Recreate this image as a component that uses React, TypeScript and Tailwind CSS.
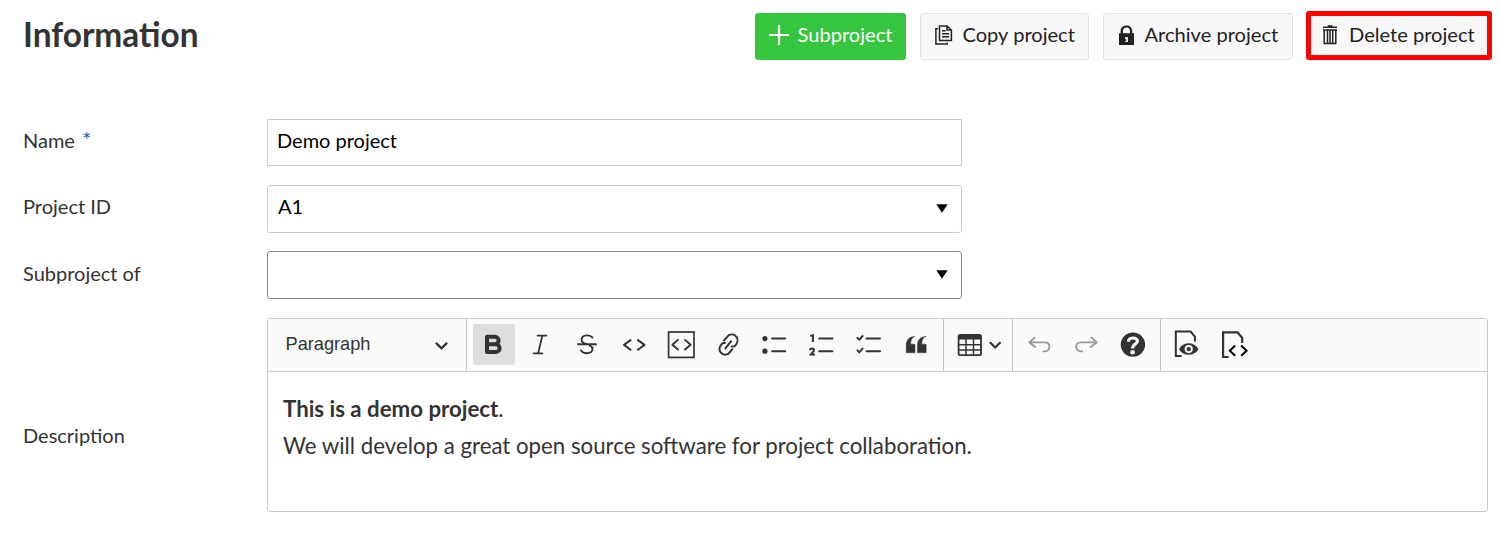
import type { ReactNode } from "react";

const lato = "font-['Lato','Liberation_Sans',sans-serif]";

function Tool({ children, active, muted, w }: { children: ReactNode; active?: boolean; muted?: boolean; w?: string }) {
  return (
    <button
      className={`flex h-[41px] shrink-0 items-center justify-center rounded-[3px] ${w ?? "w-[42px]"} ${
        active ? "bg-[#dedede]" : ""
      } ${muted ? "text-[#999999]" : "text-[#333333]"}`}
    >
      {children}
    </button>
  );
}

/* 42 x 41 drawing area, one unit per pixel */
function Glyph({ children, sw = 2, wide }: { children: ReactNode; sw?: number; wide?: boolean }) {
  return (
    <svg
      width={wide ? 60 : 42}
      height="41"
      viewBox={wide ? "0 0 60 41" : "0 0 42 41"}
      fill="none"
      stroke="currentColor"
      strokeWidth={sw}
      strokeLinecap="round"
      strokeLinejoin="round"
      className="shrink-0"
    >
      {children}
    </svg>
  );
}

function Separator() {
  return <div className="-mb-px w-px shrink-0 self-stretch bg-[#c4c4c4]" />;
}

function Toolbar() {
  return (
    <div className="flex h-[53px] items-center border-b border-[#cfcfcf] bg-[#fafafa] pb-px">
      <button className="flex h-full w-[198px] shrink-0 items-center justify-between pr-[18px] pl-[17.5px] font-['Liberation_Sans',sans-serif] text-[18.2px] text-[#333]">
        <span className="pt-[1px]">Paragraph</span>
        <svg width="13" height="8" viewBox="0 0 13 8" fill="none" stroke="currentColor" strokeWidth="2.2" strokeLinecap="round" strokeLinejoin="round" className="mt-[2px]">
          <path d="M1.5 1.4 6.5 6.4 11.5 1.4" />
        </svg>
      </button>
      <Separator />
      <div className="flex w-[476px] shrink-0 gap-[5px] pl-[6px]">
        <Tool active>
          <Glyph sw={4}>
            <path strokeLinejoin="round" d="M14 12.8H21.8a3.8 3.7 0 0 1 0 7.4H14H22.6a4 3.95 0 0 1 0 7.9H14Z" />
          </Glyph>
        </Tool>
        <Tool>
          <Glyph sw={1.8}>
            <path d="M17.5 11.6H26.5M13.7 29.3H22.3M22.4 11.6 18.1 29.3" />
          </Glyph>
        </Tool>
        <Tool>
          <Glyph sw={1.9}>
            <path d="M25.5 13.6C24.2 11.7 22.3 11.3 20 11.4C16.8 11.5 14.6 13.3 14.6 15.7C14.6 18 16.3 19.3 19.2 20M22.6 21.4C24.6 22.3 25.6 23.5 25.5 25.3C25.3 27.9 23 29.2 19.8 29.2C17 29.2 15.1 28.2 13.9 26.2" />
            <path strokeLinecap="butt" d="M10.2 20.3H29.8" />
          </Glyph>
        </Tool>
        <Tool>
          <Glyph>
            <path strokeLinecap="butt" d="M17.2 15.6 10 20.9 17.2 26.2M23.3 15.6 30.5 20.9 23.3 26.2" />
          </Glyph>
        </Tool>
        <Tool>
          <Glyph sw={1.7}>
            <rect x="7.6" y="8" width="25.4" height="25.4" strokeLinejoin="miter" />
            <path strokeWidth="1.9" strokeLinecap="butt" d="M17.6 15.4 11.4 20.7 17.6 26M23.4 15.4 29.6 20.7 23.4 26" />
          </Glyph>
        </Tool>
        <Tool>
          <Glyph sw={2}>
            <path d="M17.4 24.4 23.2 17.2M15.9 16.6 19.2 12.8C21.3 10.2 24.7 9.8 27.3 11.8S30.3 17.3 28.3 20.1L26.6 22.3L23.8 22.6M24.3 25.2 21.9 28.2C19.7 31 16.4 31.4 13.7 29.4S10.8 23.9 12.9 21.1L14.4 19.3L17 19" />
          </Glyph>
        </Tool>
        <Tool>
          <Glyph>
            <path d="M17.2 14.6H30.2M17.2 27.2H30.2" />
            <circle cx="9.9" cy="14.6" r="2.6" fill="currentColor" stroke="none" />
            <circle cx="9.9" cy="27.2" r="2.6" fill="currentColor" stroke="none" />
          </Glyph>
        </Tool>
        <Tool>
          <Glyph>
            <path d="M17.2 14.6H30.4M17.2 27.2H30.4" />
            <path strokeLinecap="butt" strokeLinejoin="miter" d="M8.4 12 10.9 11.2V17.9M7.9 26.2C8.1 24 12 23.8 12 26.1C12 27.6 9.9 29 8.9 30.4H12.9" />
          </Glyph>
        </Tool>
        <Tool>
          <Glyph>
            <path d="M17.5 14.6H31M17.5 27.2H31M8.4 13.8 10.2 15.8 13.6 12M8.4 26.4 10.2 28.4 13.6 24.6" />
          </Glyph>
        </Tool>
        <Tool>
          <Glyph sw={0.4}>
            <path
              fill="currentColor"
              d="M18.8 12.4C15.8 13.4 14.7 16 14.7 20.2H19V28.8H10.2V21.3C10.2 16.2 12.8 12.6 18.8 12.4ZM30 12.4C27 13.4 25.8 16 25.8 20.2H30.2V28.8H21.4V21.3C21.4 16.2 24 12.6 30 12.4Z"
            />
          </Glyph>
        </Tool>
      </div>
      <Separator />
      <div className="flex w-[68px] shrink-0 pl-[5px]">
        <Tool w="w-[60px]">
          <Glyph wide>
            <rect x="9.6" y="11" width="22.4" height="20.2" rx="1.8" strokeWidth="1.8" />
            <path fill="currentColor" stroke="none" d="M9 11H32.5V15.6H9Z" />
            <path strokeWidth="1.5" d="M9.6 20.8H32M9.6 26H32M17 15V31M24.5 15V31" />
            <path strokeWidth="2.2" d="M41.4 18.8 46.2 23.5 51 18.8" />
          </Glyph>
        </Tool>
      </div>
      <Separator />
      <div className="flex w-[147px] shrink-0 gap-[5px] pl-[6px]">
        <Tool muted>
          <Glyph sw={1.9}>
            <path d="M15.5 13.6 10.4 18.4 16.2 23M10.8 18.4H26C29 18.4 30.4 20.6 30.4 22.8S29 27.4 26 27.4H24.5" />
          </Glyph>
        </Tool>
        <Tool muted>
          <Glyph sw={1.9}>
            <path d="M25.5 13.6 30.6 18.4 24.8 23M30.2 18.4H15C12 18.4 10.1 20.6 10.1 22.8S12 27.4 15 27.4H16.2" />
          </Glyph>
        </Tool>
        <Tool>
          <Glyph>
            <circle cx="19.9" cy="20.6" r="12.2" fill="currentColor" stroke="none" />
            <path stroke="#fafafa" strokeWidth="3.2" strokeLinecap="butt" d="M15.4 17.6C15.6 13 24.4 12.8 24.4 17.2C24.4 20.2 19.6 20 19.6 24.4" />
            <circle cx="19.6" cy="28.2" r="2.3" fill="#fafafa" stroke="none" />
          </Glyph>
        </Tool>
      </div>
      <Separator />
      <div className="flex shrink-0 gap-[5px] pl-[6px]">
        <Tool>
          <Glyph sw={2.2}>
            <path strokeLinecap="butt" strokeLinejoin="miter" strokeWidth="2" d="M14.6 32H8.8V7.6H23.6L28 12.8V17.6" />
            <path fill="currentColor" stroke="none" d="M12 25.2C16.3 17.3 27 17.3 31.5 25.2C27 32.7 16.3 32.7 12 25.2Z" />
            <circle cx="21.7" cy="25.1" r="4.1" fill="#fafafa" stroke="none" />
            <circle cx="21.7" cy="25.1" r="2.2" fill="currentColor" stroke="none" />
          </Glyph>
        </Tool>
        <Tool>
          <Glyph sw={2.2}>
            <path strokeLinecap="butt" strokeLinejoin="miter" d="M14.6 33H9.1V8.4H23.6L28.2 14V19" />
            <path stroke="#000" strokeWidth="2" strokeLinecap="butt" strokeLinejoin="miter" d="M21.2 21.6 15.8 26.7 21.2 31.7M27.2 21.6 32.6 26.7 27.2 31.7" />
          </Glyph>
        </Tool>
      </div>
    </div>
  );
}

const outline = "flex h-[47px] items-center rounded-[3px] border border-[#e2e2e2] bg-[#f8f8f8] text-[#222]";

function Caret() {
  return (
    <svg width="12" height="9" viewBox="0 0 12 9" className="shrink-0">
      <path d="M.3.3H11.7L6 8.8Z" fill="#000" />
    </svg>
  );
}

function Field({ label, children }: { label: ReactNode; children: ReactNode }) {
  return (
    <div className="flex items-center">
      <label className="w-[244px] shrink-0 pb-[5px] text-[20px] leading-6">{label}</label>
      {children}
    </div>
  );
}

export default function App() {
  return (
    <main className={`h-[533px] w-[1500px] overflow-hidden bg-white pl-[23px] text-[#333] ${lato}`}>
      <header className="flex h-[72px] items-start justify-between pt-[12px] pr-[8px]">
        <h1 className="text-[33.4px] leading-[44px] font-bold">Information</h1>
        <div className="flex text-[20.1px]">
          <button className="mt-[1px] mr-[14px] flex h-[47px] w-[151px] items-center rounded-[3px] bg-[#35c53f] pb-[4px] pl-[14px] text-white">
            <svg width="20" height="20" viewBox="0 0 20 20" className="mr-[9px]" stroke="#fff" strokeWidth="2.2">
              <path d="M10 0V20M0 10H20" />
            </svg>
            <span>Subproject</span>
          </button>
          <button className={`${outline} mt-[1px] mr-[14px] w-[169px] pb-[4px] pl-[14px]`}>
            <svg width="18" height="20" viewBox="0 0 18 20" className="mr-[10px]" fill="none" stroke="currentColor" strokeWidth="1.5">
              <path d="M4.5.9H12L16.4 5V15.6H4.5ZM3 3.7H.9V19H12.2V17.4M12 1V5H16M7 5.7H10.5M7 8.8H14M7 11.8H14" />
            </svg>
            <span>Copy project</span>
          </button>
          <button className={`${outline} mt-[1px] mr-[13.5px] w-[190px] pb-[4px] pl-[15px]`}>
            <svg width="15" height="20" viewBox="0 0 15 20" className="mr-[11px]" fill="currentColor">
              <path d="M0 8.2H1.6V6C1.6-1.5 13.3-1.5 13.3 6V8.2H15V20H0ZM4 8.2H11V6C11 1.4 4 1.4 4 6Z" />
              <path d="M6 12H9V17H6Z" fill="#e8ddd0" />
              <path d="M6 14H7V16H6Z" />
            </svg>
            <span>Archive project</span>
          </button>
          <button className="mt-[-1px] flex h-[49px] w-[186px] items-center rounded-[3px] border-[5px] border-[#ff0000] bg-[#f8f8f8] pb-[2px] pl-[12px] text-[#222]">
            <svg width="14" height="20" viewBox="0 0 14 20" className="mr-[12px]" fill="none" stroke="currentColor" strokeWidth="1.5">
              <path d="M0 2.2H14M4.8 1H9.4M0 5H14M1.2 5V18.4H12.8V5M4.5 5V18M7 5V18M9.7 5V18" />
            </svg>
            <span>Delete project</span>
          </button>
        </div>
      </header>
      <div className="flex flex-col pt-[47px]">
        <Field label={<span>Name <span className="ml-[2px] text-[22px] leading-4 text-[#1a67a3]">*</span></span>}>
          <div className="flex h-[47px] w-[695px] items-center border border-[#cbcbcb] pb-[5px] pl-[9px] text-[20px] text-black">Demo project</div>
        </Field>
        <div className="h-[19px]" />
        <Field label={<span className="block pb-[1px]">Project ID</span>}>
          <div className="flex h-12 w-[695px] items-center justify-between rounded-[3px] border border-[#cbcbcb] pr-[13px] pb-[1px] pl-[10px] text-[20.1px] text-black">
            <span className="pb-[4px]">A1</span>
            <Caret />
          </div>
        </Field>
        <div className="h-[18px]" />
        <Field label="Subproject of">
          <div className="flex h-12 w-[695px] items-center justify-end rounded-[3px] border border-[#8b8b8b] pr-[13px] pb-[1px]">
            <Caret />
          </div>
        </Field>
        <div className="h-[19px]" />
        <Field label={<span className="block pt-[44px]">Description</span>}>
          <div className="h-[194px] w-[1221px] overflow-hidden rounded-[3px] border border-[#c9c9c9]">
            <Toolbar />
            <div className="pt-[19px] pl-[15px] text-[22.26px] leading-[36.5px]">
              <p><strong className="font-bold">This is a demo project</strong>.</p>
              <p>We will develop a great open source software for project collaboration.</p>
            </div>
          </div>
        </Field>
      </div>
    </main>
  );
}
